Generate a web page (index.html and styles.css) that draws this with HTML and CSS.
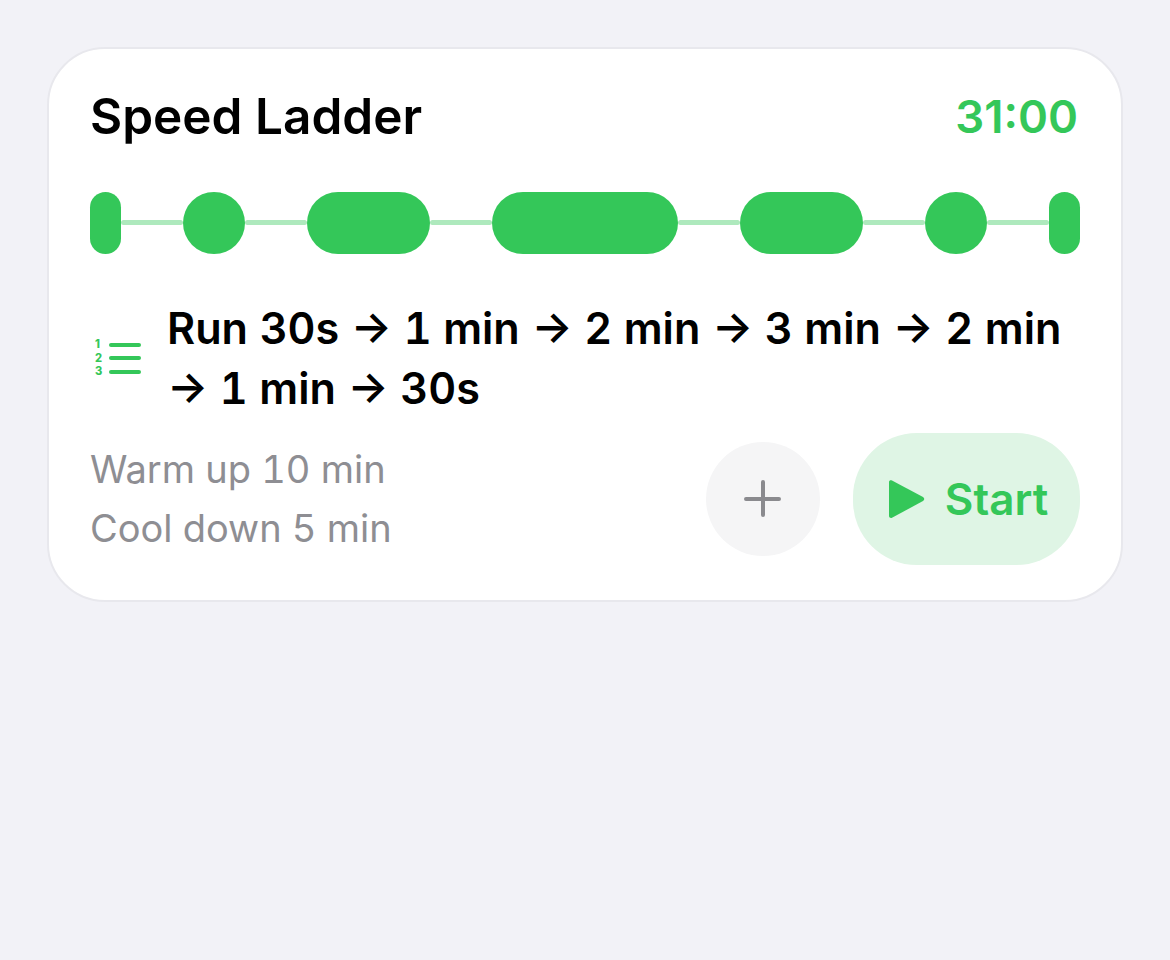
FILE: index.html
```html
<!DOCTYPE html>
<html lang="en">
<head>
  <meta charset="UTF-8">
  <title>Speed Ladder</title>
  <link rel="stylesheet" href="styles.css">
</head>
<body>
  <div class="card">
    <div class="header">
      <div class="title">Speed Ladder</div>
      <div class="duration">31:00</div>
    </div>
    <div class="ladder">
      <div class="seg seg-1"></div><div class="link"></div>
      <div class="seg seg-2"></div><div class="link"></div>
      <div class="seg seg-4"></div><div class="link"></div>
      <div class="seg seg-6"></div><div class="link"></div>
      <div class="seg seg-4"></div><div class="link"></div>
      <div class="seg seg-2"></div><div class="link"></div>
      <div class="seg seg-1"></div>
    </div>
    <div class="plan">
      <div class="plan-icon">
        <div class="plan-row"><span class="num">1</span><span class="bar"></span></div>
        <div class="plan-row"><span class="num">2</span><span class="bar"></span></div>
        <div class="plan-row"><span class="num">3</span><span class="bar"></span></div>
      </div>
      <div class="plan-text">Run 30s → 1 min → 2 min → 3 min → 2 min → 1 min → 30s</div>
    </div>
    <div class="footer">
      <div class="notes">
        <div>Warm up 10 min</div>
        <div>Cool down 5 min</div>
      </div>
      <div class="actions">
        <button class="add">
          <svg width="38" height="38" viewBox="0 0 38 38"><path d="M19 2V35M2 19H35" fill="none" stroke="#8a8a8e" stroke-width="4" stroke-linecap="round"/></svg>
        </button>
        <button class="start">
          <svg width="36" height="40" viewBox="0 0 36 40"><path d="M3 1.5L34 18C35.7 19 35.7 21 34 22L3 38.8C1.6 39.5 0 38.5 0 37V3C0 1.5 1.6 .8 3 1.5Z" fill="#34c759"/></svg>
          <span>Start</span>
        </button>
      </div>
    </div>
  </div>
</body>
</html>
```

FILE: styles.css
```css
* {
  font-family: Inter, "Liberation Sans", sans-serif;
  box-sizing: border-box;
}
body {
  margin: 0;
  min-height: 960px;
  padding: 47px 47px 0 47px;
  background: #f2f2f7;
}
.card {
  width: 1076px;
  height: 555px;
  background: #fff;
  border: 2px solid #e8e8ed;
  border-radius: 58px;
  padding: 0 41px 0 41px;
}
.header {
  display: flex;
  justify-content: space-between;
  align-items: center;
  height: 60px;
  margin-top: 37px;
}
.title {
  font-size: 49.5px;
  font-weight: 600;
  color: #000;
}
.duration {
  font-size: 45.5px;
  font-weight: 600;
  color: #34c759;
  margin-right: 2px;
}
.ladder {
  display: flex;
  align-items: center;
  height: 62px;
  margin-top: 46px;
}
.seg {
  height: 62px;
  background: #34c759;
}
.seg-1 { flex: 1 1 0; border-radius: 15.5px; }
.seg-2 { flex: 2 1 0; border-radius: 50%; }
.seg-4 { flex: 4 1 0; border-radius: 31px; }
.seg-6 { flex: 6 1 0; border-radius: 31px; }
.link {
  flex: 2 1 0;
  height: 5px;
  margin-bottom: 1px;
  background: #aee9bd;
  border-radius: 3px;
}
.plan {
  display: flex;
  align-items: center;
  margin-top: 44px;
}
.plan-icon {
  width: 77px;
  padding-left: 5px;
  flex-shrink: 0;
}
.plan-row {
  display: flex;
  align-items: center;
  height: 13.5px;
}
.num {
  width: 14px;
  font-size: 11.1px;
  line-height: 13px;
  font-weight: 800;
  color: #34c759;
}
.bar {
  width: 32px;
  height: 4px;
  background: #34c759;
  border-radius: 2px;
}
.plan-text {
  font-size: 43.2px;
  font-weight: 600;
  font-feature-settings: "tnum";
  line-height: 60px;
  color: #000;
}
.footer {
  display: flex;
  justify-content: space-between;
  align-items: center;
  margin-top: 15px;
}
.notes {
  font-size: 38px;
  line-height: 59px;
  font-feature-settings: "tnum";
  color: #8e8e93;
}
.actions {
  display: flex;
  align-items: center;
  gap: 33px;
}
button {
  border: none;
  padding: 0;
  display: flex;
  align-items: center;
  justify-content: center;
}
.add {
  width: 114px;
  height: 114px;
  border-radius: 50%;
  background: #f5f5f6;
}
.start {
  width: 227px;
  height: 132px;
  padding-left: 4px;
  gap: 20px;
  border-radius: 64px;
  background: #dff5e5;
  font-size: 44px;
  font-weight: 600;
  color: #34c759;
}
```
